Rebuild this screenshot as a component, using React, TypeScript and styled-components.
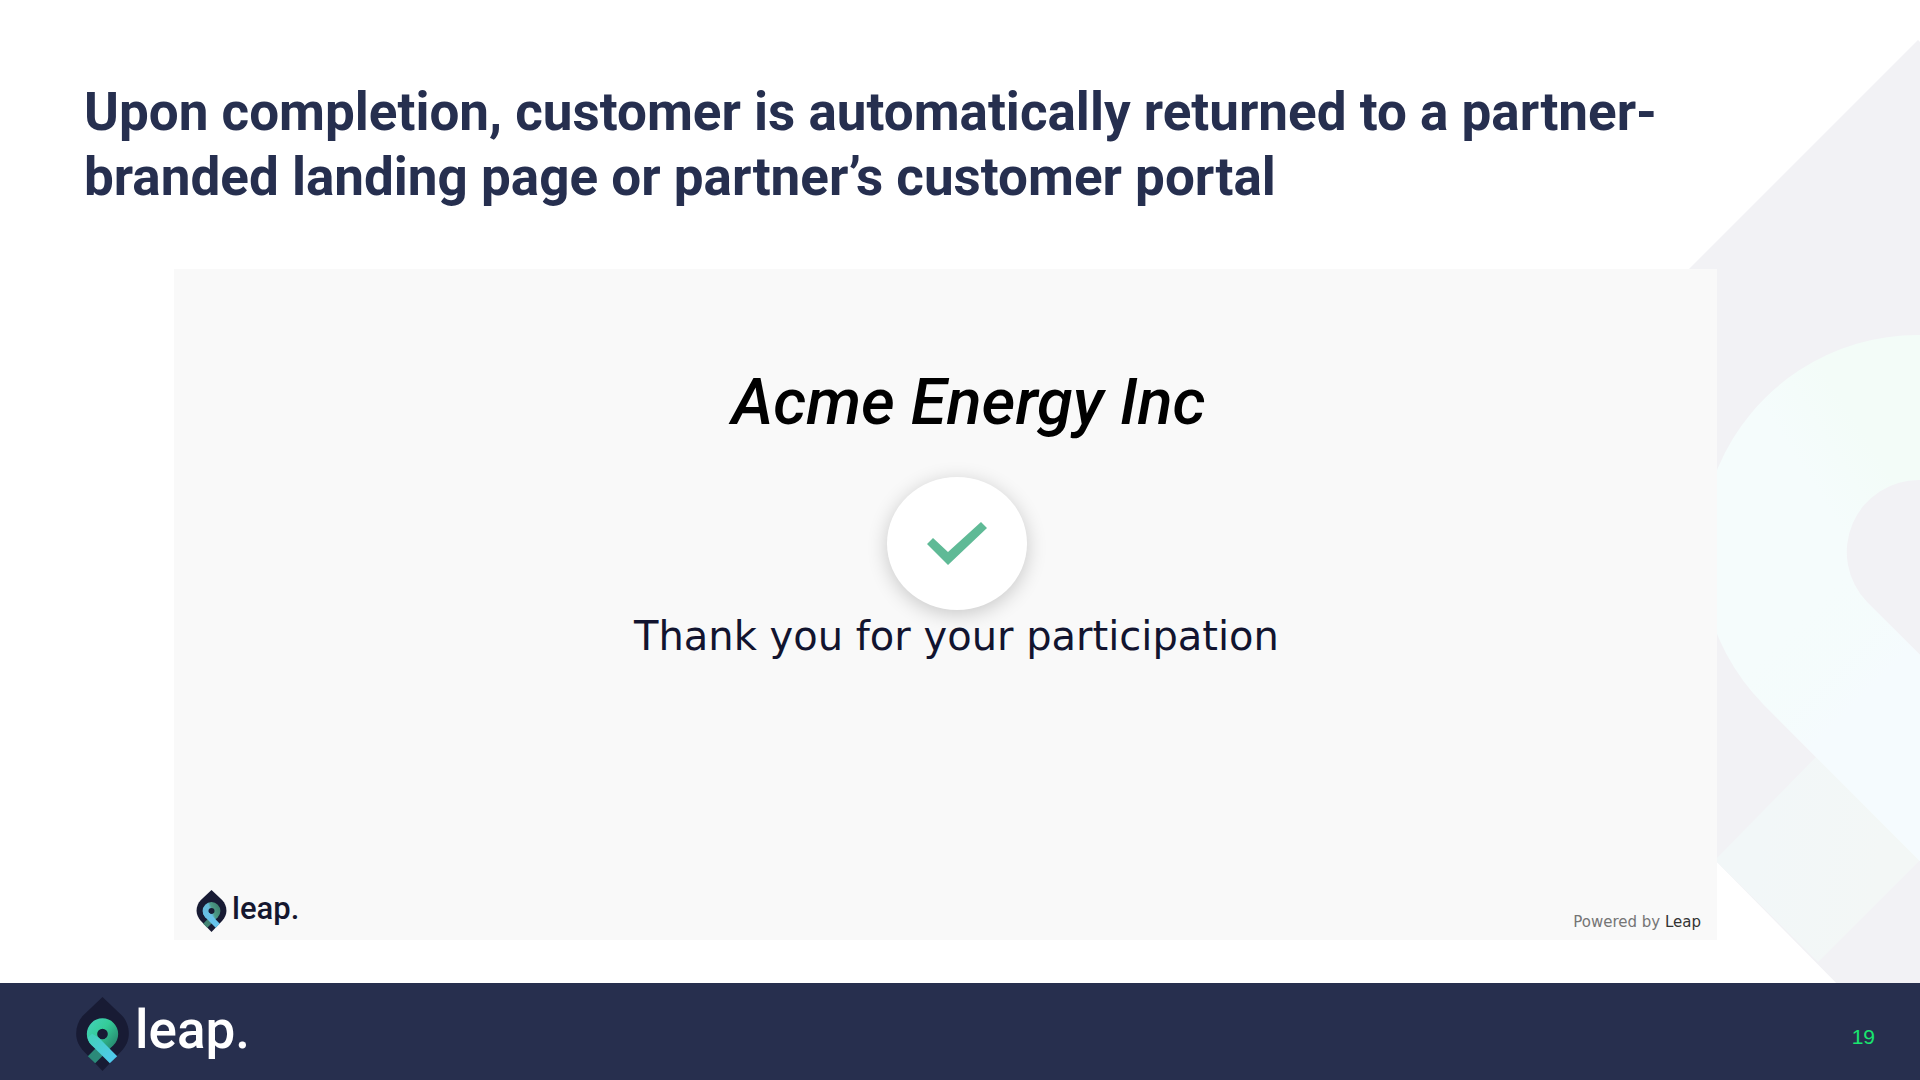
import React from 'react';
import styled, { createGlobalStyle } from 'styled-components';

const GlobalStyle = createGlobalStyle`
  *, *::before, *::after { box-sizing: border-box; }
  body { margin: 0; background: #ffffff; }
  h1, h2, p { margin: 0; }
`;

const roboto = 'Roboto, "Liberation Sans", sans-serif';
const verdana = 'Verdana, "DejaVu Sans", sans-serif';

const Slide = styled.div`
  position: relative;
  display: flex;
  flex-direction: column;
  min-height: 100vh;
  overflow: hidden;
  background: #ffffff;
  font-family: ${roboto};
`;

const Backdrop = styled.svg`
  position: absolute;
  top: 0;
  right: 0;
  width: 280px;
  height: 1080px;
`;

const Header = styled.header`
  position: relative;
  padding: 80px 200px 59px 84px;
`;

const Title = styled.h1`
  font-size: 53px;
  line-height: 65px;
  font-weight: 700;
  color: #262f4f;
`;

const Panel = styled.main`
  position: relative;
  display: flex;
  flex: 1;
  flex-direction: column;
  justify-content: space-between;
  margin: 0 203px 43px 174px;
  background: #f9f9f9;
`;

const Message = styled.section`
  display: flex;
  flex-direction: column;
  align-items: center;
  padding: 95px 0 0 22px;
`;

const PartnerName = styled.h2`
  padding-left: 24px;
  font-size: 65px;
  line-height: 76px;
  font-style: italic;
  font-weight: 500;
  color: #000000;
`;

const CheckBadge = styled.div`
  display: flex;
  align-items: center;
  justify-content: center;
  width: 140px;
  height: 133px;
  margin-top: 37px;
  border-radius: 50%;
  background: #ffffff;
  box-shadow: 0 4px 20px rgba(0, 0, 0, 0.2);
`;

const Thanks = styled.p`
  margin-top: 2px;
  font-family: ${verdana};
  font-size: 40px;
  line-height: 48px;
  color: #12142f;
`;

const PanelFooter = styled.div`
  display: flex;
  align-items: flex-end;
  justify-content: space-between;
  padding: 0 16px 8px 22px;
`;

const Powered = styled.p`
  font-family: ${verdana};
  font-size: 15px;
  line-height: 20px;
  color: #757575;
`;

const PoweredLink = styled.a`
  color: #333333;
  text-decoration: none;
`;

const Footer = styled.footer`
  position: relative;
  display: flex;
  align-items: center;
  justify-content: space-between;
  height: 97px;
  padding: 4px 45px 0 76px;
  background: #272f4e;
`;

const Brand = styled.div<{ $large?: boolean }>`
  display: flex;
  align-items: flex-start;
  gap: ${(p) => (p.$large ? 6 : 5)}px;
  font-size: ${(p) => (p.$large ? 53 : 31)}px;
  line-height: ${(p) => (p.$large ? 66 : 38)}px;
  font-weight: 500;
  color: ${(p) => (p.$large ? '#ffffff' : '#15172f')};
`;

const Leaf = styled.svg<{ $large?: boolean }>`
  display: block;
  width: ${(p) => (p.$large ? 53 : 31)}px;
  height: ${(p) => (p.$large ? 74 : 42)}px;
`;

const PageNumber = styled.span`
  padding-top: 6px;
  font-family: "Liberation Sans", Arial, sans-serif;
  font-size: 21px;
  line-height: 24px;
  color: #19e66f;
`;

function Logo({ large }: { large?: boolean }) {
  const id = large ? 'footer' : 'panel';
  return (
    <Brand $large={large}>
      <Leaf $large={large} viewBox="48 50 158 222" aria-hidden="true">
        <defs>
          {large ? (
            <linearGradient id={`${id}-ring`} x1="95" y1="130" x2="168" y2="190" gradientUnits="userSpaceOnUse">
              <stop offset="0" stopColor="#3fcfb0" />
              <stop offset="0.4" stopColor="#34cc98" />
              <stop offset="1" stopColor="#278a70" />
            </linearGradient>
          ) : (
            <linearGradient id={`${id}-ring`} x1="80" y1="185" x2="174" y2="150" gradientUnits="userSpaceOnUse">
              <stop offset="0" stopColor="#67bfe4" />
              <stop offset="0.48" stopColor="#67b9d8" />
              <stop offset="0.6" stopColor="#4d9b87" />
              <stop offset="1" stopColor="#3d806e" />
            </linearGradient>
          )}
          <linearGradient id={`${id}-band`} x1="92" y1="172" x2="160" y2="240" gradientUnits="userSpaceOnUse">
            <stop offset="0" stopColor={large ? '#43d0bd' : '#67bfe4'} />
            <stop offset="1" stopColor={large ? '#50c9ee' : '#66c5ef'} />
          </linearGradient>
        </defs>
        <path d="M127 50L183 103C198 118 206 138 206 160C206 180 197 198 184 212L127 272L70 212C57 198 48 180 48 160C48 138 56 118 71 103Z" fill="#181b34" />
        <path d="M160 194L105 249L83 228L138 172Z" fill={large ? '#2b8a79' : '#438474'} />
        <path fillRule="evenodd" d="M127 114A47 47 0 1 1 127 208A47 47 0 1 1 127 114ZM127 145A16 16 0 1 0 127 177A16 16 0 1 0 127 145Z" fill={`url(#${id}-ring)`} />
        <path d="M94 194L149 249L171 228L116 172L96 160L82 172Q85 185 94 194Z" fill={`url(#${id}-band)`} />
      </Leaf>
      <span>leap.</span>
    </Brand>
  );
}

export default function App() {
  return (
    <>
      <GlobalStyle />
      <Slide>
        <Backdrop viewBox="1640 0 280 1080" aria-hidden="true">
          <defs>
            <linearGradient id="arc" x1="1800" y1="465" x2="1860" y2="427" gradientUnits="userSpaceOnUse">
              <stop offset="0" stopColor="#f5fcfc" />
              <stop offset="1" stopColor="#f3fcf8" />
            </linearGradient>
            <linearGradient id="tail" x1="1790" y1="630" x2="1860" y2="700" gradientUnits="userSpaceOnUse">
              <stop offset="0" stopColor="#f4fdfb" stopOpacity="0" />
              <stop offset="1" stopColor="#f5fbfe" />
            </linearGradient>
            <linearGradient id="square" x1="1760" y1="850" x2="1880" y2="870" gradientUnits="userSpaceOnUse">
              <stop offset="0" stopColor="#f2f7f8" />
              <stop offset="1" stopColor="#f3f7f6" />
            </linearGradient>
          </defs>
          <path d="M1918 40L1920 42V1068L1640 784V318Z" fill="#f2f2f5" />
          <path d="M1816 757L1715 860L1818 962L1920 860Z" fill="url(#square)" />
          <path d="M1920 335A217 217 0 0 0 1764 705L1920 861V655L1867 602A72 72 0 0 1 1920 480Z" fill="url(#arc)" />
          <path d="M1920 335A217 217 0 0 0 1764 705L1920 861V655L1867 602A72 72 0 0 1 1920 480Z" fill="url(#tail)" />
        </Backdrop>
        <Header>
          <Title>
            Upon completion, customer is automatically returned to a partner-branded landing page or
            partner’s customer portal
          </Title>
        </Header>
        <Panel>
          <Message>
            <PartnerName>Acme Energy Inc</PartnerName>
            <CheckBadge>
              <svg width="60" height="43" viewBox="0 0 60 43" role="img" aria-label="Complete">
                <path d="M0 22L6 16L21 30L54 0L60 6L21 43Z" fill="#5fba96" />
              </svg>
            </CheckBadge>
            <Thanks>Thank you for your participation</Thanks>
          </Message>
          <PanelFooter>
            <Logo />
            <Powered>
              Powered by <PoweredLink href="#leap">Leap</PoweredLink>
            </Powered>
          </PanelFooter>
        </Panel>
        <Footer>
          <Logo large />
          <PageNumber>19</PageNumber>
        </Footer>
      </Slide>
    </>
  );
}
